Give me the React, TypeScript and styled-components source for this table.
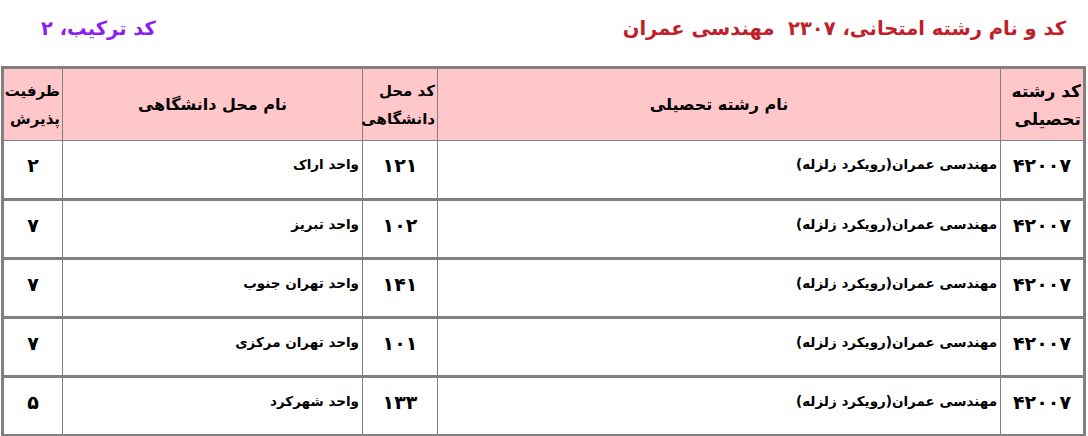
import React from 'react';
import styled, { createGlobalStyle } from 'styled-components';

const GlobalStyle = createGlobalStyle`
  html, body {
    margin: 0;
    padding: 0;
    background: #ffffff;
  }
  body {
    font-family: "DejaVu Sans", "Noto Sans", sans-serif;
  }
`;

const Page = styled.div`
  direction: rtl;
  width: 1088px;
  height: 436px;
  overflow: hidden;
  padding: 0 2px 0 1px;
  box-sizing: border-box;
`;

const TitleBar = styled.div`
  display: flex;
  justify-content: space-between;
  align-items: center;
  height: 66px;
  padding: 0 20px 10px 40px;
  box-sizing: border-box;
`;

const Title = styled.h1<{ $color: string }>`
  margin: 0;
  font-size: 19.5px;
  font-weight: bold;
  color: ${props => props.$color};
  white-space: pre;
`;

const Table = styled.table`
  width: 100%;
  border-collapse: collapse;
  table-layout: fixed;
  border: 3px solid #808080;
`;

const HeadCell = styled.th<{ $align?: 'center' | 'right'; $size?: number }>`
  background-color: #ffc7c9;
  height: 71px;
  padding: 0 2px;
  border-left: 1px solid #808080;
  border-bottom: 1px solid #808080;
  font-size: ${props => props.$size || 16}px;
  font-weight: bold;
  line-height: 28px;
  color: #000000;
  text-align: ${props => props.$align || 'center'};
  vertical-align: middle;
  white-space: nowrap;
`;

const Row = styled.tr`
  border-bottom: 3px solid #808080;
`;

const Cell = styled.td<{ $kind: 'code' | 'name' }>`
  box-sizing: border-box;
  height: 59px;
  padding: ${props => (props.$kind === 'code' ? '11px 0 0' : '13px 3px 0')};
  border-left: 1px solid #808080;
  font-weight: bold;
  font-size: ${props => (props.$kind === 'code' ? '19px' : '13.5px')};
  line-height: ${props => (props.$kind === 'code' ? '26px' : '20px')};
  text-align: ${props => (props.$kind === 'code' ? 'center' : 'right')};
  vertical-align: top;
  color: #000000;
`;

type Item = {
  courseCode: string;
  course: string;
  placeCode: string;
  place: string;
  capacity: string;
};

const rows: Item[] = [
  { courseCode: '۴۲۰۰۷', course: 'مهندسی عمران(رویکرد زلزله)', placeCode: '۱۲۱', place: 'واحد اراک', capacity: '۲' },
  { courseCode: '۴۲۰۰۷', course: 'مهندسی عمران(رویکرد زلزله)', placeCode: '۱۰۲', place: 'واحد تبریز', capacity: '۷' },
  { courseCode: '۴۲۰۰۷', course: 'مهندسی عمران(رویکرد زلزله)', placeCode: '۱۴۱', place: 'واحد تهران جنوب', capacity: '۷' },
  { courseCode: '۴۲۰۰۷', course: 'مهندسی عمران(رویکرد زلزله)', placeCode: '۱۰۱', place: 'واحد تهران مرکزی', capacity: '۷' },
  { courseCode: '۴۲۰۰۷', course: 'مهندسی عمران(رویکرد زلزله)', placeCode: '۱۳۳', place: 'واحد شهرکرد', capacity: '۵' },
];

const App = () => {
  return (
    <>
      <GlobalStyle />
      <Page>
        <TitleBar>
          <Title $color="#c0202a">{'کد و نام رشته امتحانی، ۲۳۰۷  مهندسی عمران'}</Title>
          <Title $color="#8b1ef0">کد ترکیب، ۲</Title>
        </TitleBar>

        <Table>
          <colgroup>
            <col style={{ width: 84 }} />
            <col style={{ width: 563 }} />
            <col style={{ width: 75 }} />
            <col style={{ width: 300 }} />
            <col style={{ width: 60 }} />
          </colgroup>
          <thead>
            <tr>
              <HeadCell $align="right" $size={17}>
                کد رشته
                <br />
                تحصیلی
              </HeadCell>
              <HeadCell>نام رشته تحصیلی</HeadCell>
              <HeadCell $align="right" $size={15}>
                کد محل
                <br />
                دانشگاهی
              </HeadCell>
              <HeadCell>نام محل دانشگاهی</HeadCell>
              <HeadCell $align="right" $size={15}>
                ظرفیت
                <br />
                پذیرش
              </HeadCell>
            </tr>
          </thead>
          <tbody>
            {rows.map((r, i) => (
              <Row key={i}>
                <Cell $kind="code">{r.courseCode}</Cell>
                <Cell $kind="name">{r.course}</Cell>
                <Cell $kind="code">{r.placeCode}</Cell>
                <Cell $kind="name">{r.place}</Cell>
                <Cell $kind="code">{r.capacity}</Cell>
              </Row>
            ))}
          </tbody>
        </Table>
      </Page>
    </>
  );
};

export default App;
